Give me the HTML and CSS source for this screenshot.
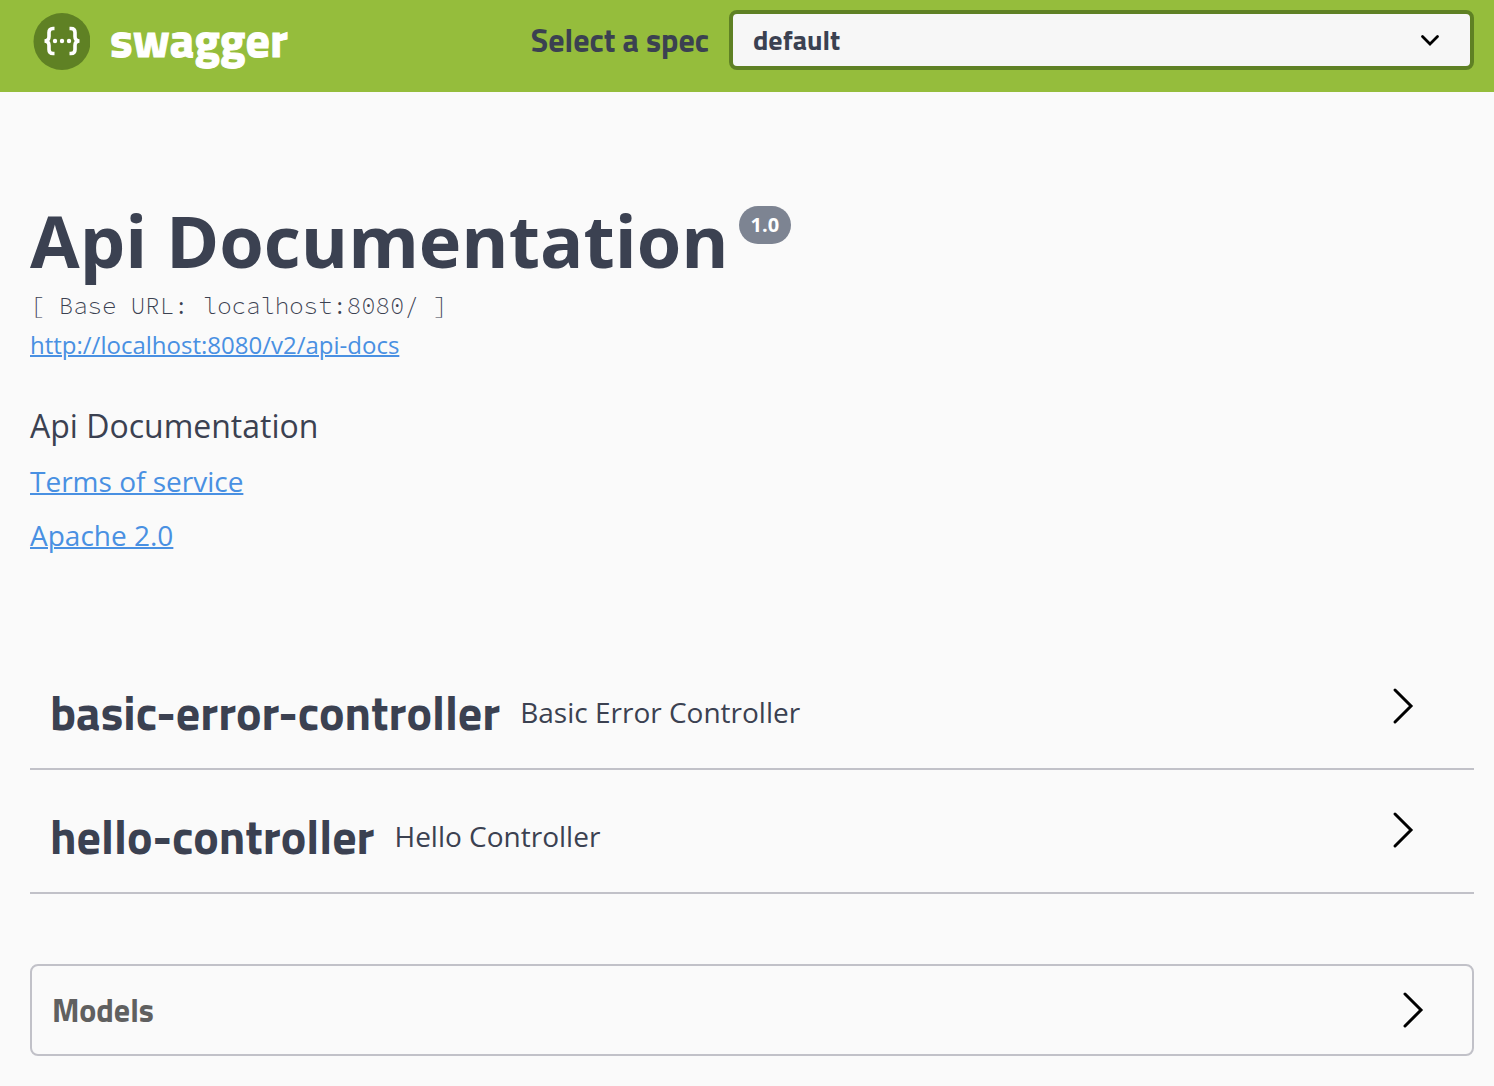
FILE: index.html
```html
<!DOCTYPE html>
<html lang="en">
<head>
  <meta charset="utf-8">
  <meta name="viewport" content="width=device-width, initial-scale=1">
  <title>Swagger UI</title>
  <link rel="stylesheet" href="styles.css">
</head>
<body>
  <header class="topbar">
    <a class="brand" href="#">
      <svg class="brand-mark" viewBox="0 0 58 58" aria-hidden="true">
        <circle cx="30" cy="29.500" r="28.500" fill="#5f8124"/>
        <g fill="none" stroke="#fff" stroke-width="3.600">
          <path d="M22.500 16.500h-1.500q-4 0-4 4v4q0 4.500-4.500 4.500q4.500 0 4.500 4.500v4q0 4 4 4h1.500"/>
          <path d="M37.500 16.500h1.500q4 0 4 4v4q0 4.500 4.500 4.500q-4.500 0-4.500 4.500v4q0 4-4 4h-1.500"/>
        </g>
        <g fill="#fff"><circle cx="23" cy="29" r="2.200"/><circle cx="30" cy="29" r="2.200"/><circle cx="37" cy="29" r="2.200"/></g>
      </svg>
      <span class="brand-name">swagger</span>
    </a>
    <label class="spec-label" for="spec">Select a spec</label>
    <div class="spec-select">
      <select id="spec"><option>default</option></select>
      <svg class="spec-arrow" viewBox="0 0 20 20" aria-hidden="true"><path d="M2.500 6.500l7.500 7.500l7.500-7.500" fill="none" stroke="#000" stroke-width="2.800" stroke-linecap="round"/></svg>
    </div>
  </header>

  <main class="page">
    <section class="info">
      <div class="title-row">
        <h1 class="title">Api Documentation</h1>
        <span class="version">1.0</span>
      </div>
      <div class="base-url">[ Base URL: localhost:8080/ ]</div>
      <a class="link docs-link" href="#">http://localhost:8080/v2/api-docs</a>
      <p class="description">Api Documentation</p>
      <a class="link info-link" href="#">Terms of service</a>
      <a class="link info-link" href="#">Apache 2.0</a>
    </section>

    <section class="tags">
      <div class="tag">
        <h2 class="tag-name">basic-error-controller</h2>
        <p class="tag-text">Basic Error Controller</p>
        <button class="expand" type="button" aria-label="Expand basic-error-controller">
          <svg class="chevron" viewBox="0 0 40 40" aria-hidden="true"><path d="M12 4l16 16l-16 16"/></svg>
        </button>
      </div>
      <div class="tag">
        <h2 class="tag-name">hello-controller</h2>
        <p class="tag-text">Hello Controller</p>
        <button class="expand" type="button" aria-label="Expand hello-controller">
          <svg class="chevron" viewBox="0 0 40 40" aria-hidden="true"><path d="M12 4l16 16l-16 16"/></svg>
        </button>
      </div>
    </section>

    <section class="models">
      <button class="models-toggle" type="button">
        <span>Models</span>
        <svg class="chevron" viewBox="0 0 40 40" aria-hidden="true"><path d="M12 4l16 16l-16 16"/></svg>
      </button>
    </section>
  </main>
</body>
</html>
```
FILE: styles.css
```css
* {
  box-sizing: border-box;
}

body {
  margin: 0;
  background: #fafafa;
  color: #3b4151;
  font-family: "Open Sans", sans-serif;
}

h1, h2, p {
  margin: 0;
}

.topbar {
  display: flex;
  align-items: flex-start;
  padding: 10px 20px 22px 32px;
  background: #95bd3c;
  font-family: "Titillium Web", Roboto, sans-serif;
  font-weight: 700;
}

.brand {
  display: flex;
  align-items: center;
  gap: 20px;
  margin-right: auto;
  color: #fff;
  text-decoration: none;
}

.brand-mark {
  width: 58px;
  height: 60px;
  padding-top: 2px;
}

.brand-name {
  font-size: 48px;
  line-height: 60px;
  -webkit-text-stroke: 1px #fff;
}

.spec-label {
  margin-right: 20px;
  font-size: 32px;
  line-height: 60px;
}

.spec-select {
  display: grid;
  align-items: center;
  width: calc(50% + 24px);
}

.spec-select select {
  grid-area: 1 / 1;
  width: 100%;
  height: 60px;
  padding: 0 20px 2px;
  appearance: none;
  border: 4px solid #5f8124;
  border-radius: 8px;
  background: #f7f7f7;
  color: #3b4151;
  font: 700 28px "Titillium Web", Roboto, sans-serif;
}

.spec-arrow {
  grid-area: 1 / 1;
  justify-self: end;
  width: 20px;
  height: 20px;
  margin-right: 34px;
  pointer-events: none;
}

.page {
  padding: 100px 20px 30px 30px;
}

.info {
  display: flex;
  flex-direction: column;
  align-items: flex-start;
}

.title-row {
  display: flex;
  align-items: flex-start;
  gap: 10px;
}

.title {
  font-size: 72px;
  line-height: 96px;
}

.version {
  margin-top: 14px;
  padding: 0 12px;
  border-radius: 20px;
  background: #7d8492;
  color: #fff;
  font-size: 20px;
  line-height: 38px;
  font-weight: 700;
}

.base-url {
  margin-top: 2px;
  font: 300 24px/32px "Source Code Pro", "Liberation Mono", monospace;
}

.link {
  color: #4990e2;
  text-decoration-thickness: 2px;
}

.docs-link {
  margin-top: 6px;
  font-size: 24px;
  line-height: 34px;
}

.description {
  margin: 42px 0 11px;
  font-size: 32px;
  line-height: 44px;
}

.info-link {
  margin-bottom: 10px;
  font-size: 28px;
  line-height: 44px;
}

.tags {
  margin-top: 79px;
}

.tag {
  display: flex;
  align-items: center;
  gap: 20px;
  height: 124px;
  padding: 0 20px;
  border-bottom: 2px solid #c1c1c8;
}

.tag-name {
  padding-top: 12px;
  font: 700 48px/56px "Titillium Web", Roboto, sans-serif;
}

.tag-text {
  flex: 1;
  padding-top: 10px;
  font-size: 28px;
  line-height: 40px;
}

.expand {
  display: flex;
  margin-right: 31px;
  padding: 0 0 2px;
  border: 0;
  background: none;
}

.chevron {
  width: 40px;
  height: 40px;
  fill: none;
  stroke: #000;
  stroke-width: 3;
  stroke-linecap: round;
}

.models {
  margin-top: 70px;
  border: 2px solid #c1c1c8;
  border-radius: 8px;
}

.models-toggle {
  display: flex;
  align-items: center;
  justify-content: space-between;
  width: 100%;
  height: 88px;
  padding: 0 39px 0 20px;
  border: 0;
  background: none;
  color: #606060;
  font: 700 32px "Titillium Web", Roboto, sans-serif;
}
```
